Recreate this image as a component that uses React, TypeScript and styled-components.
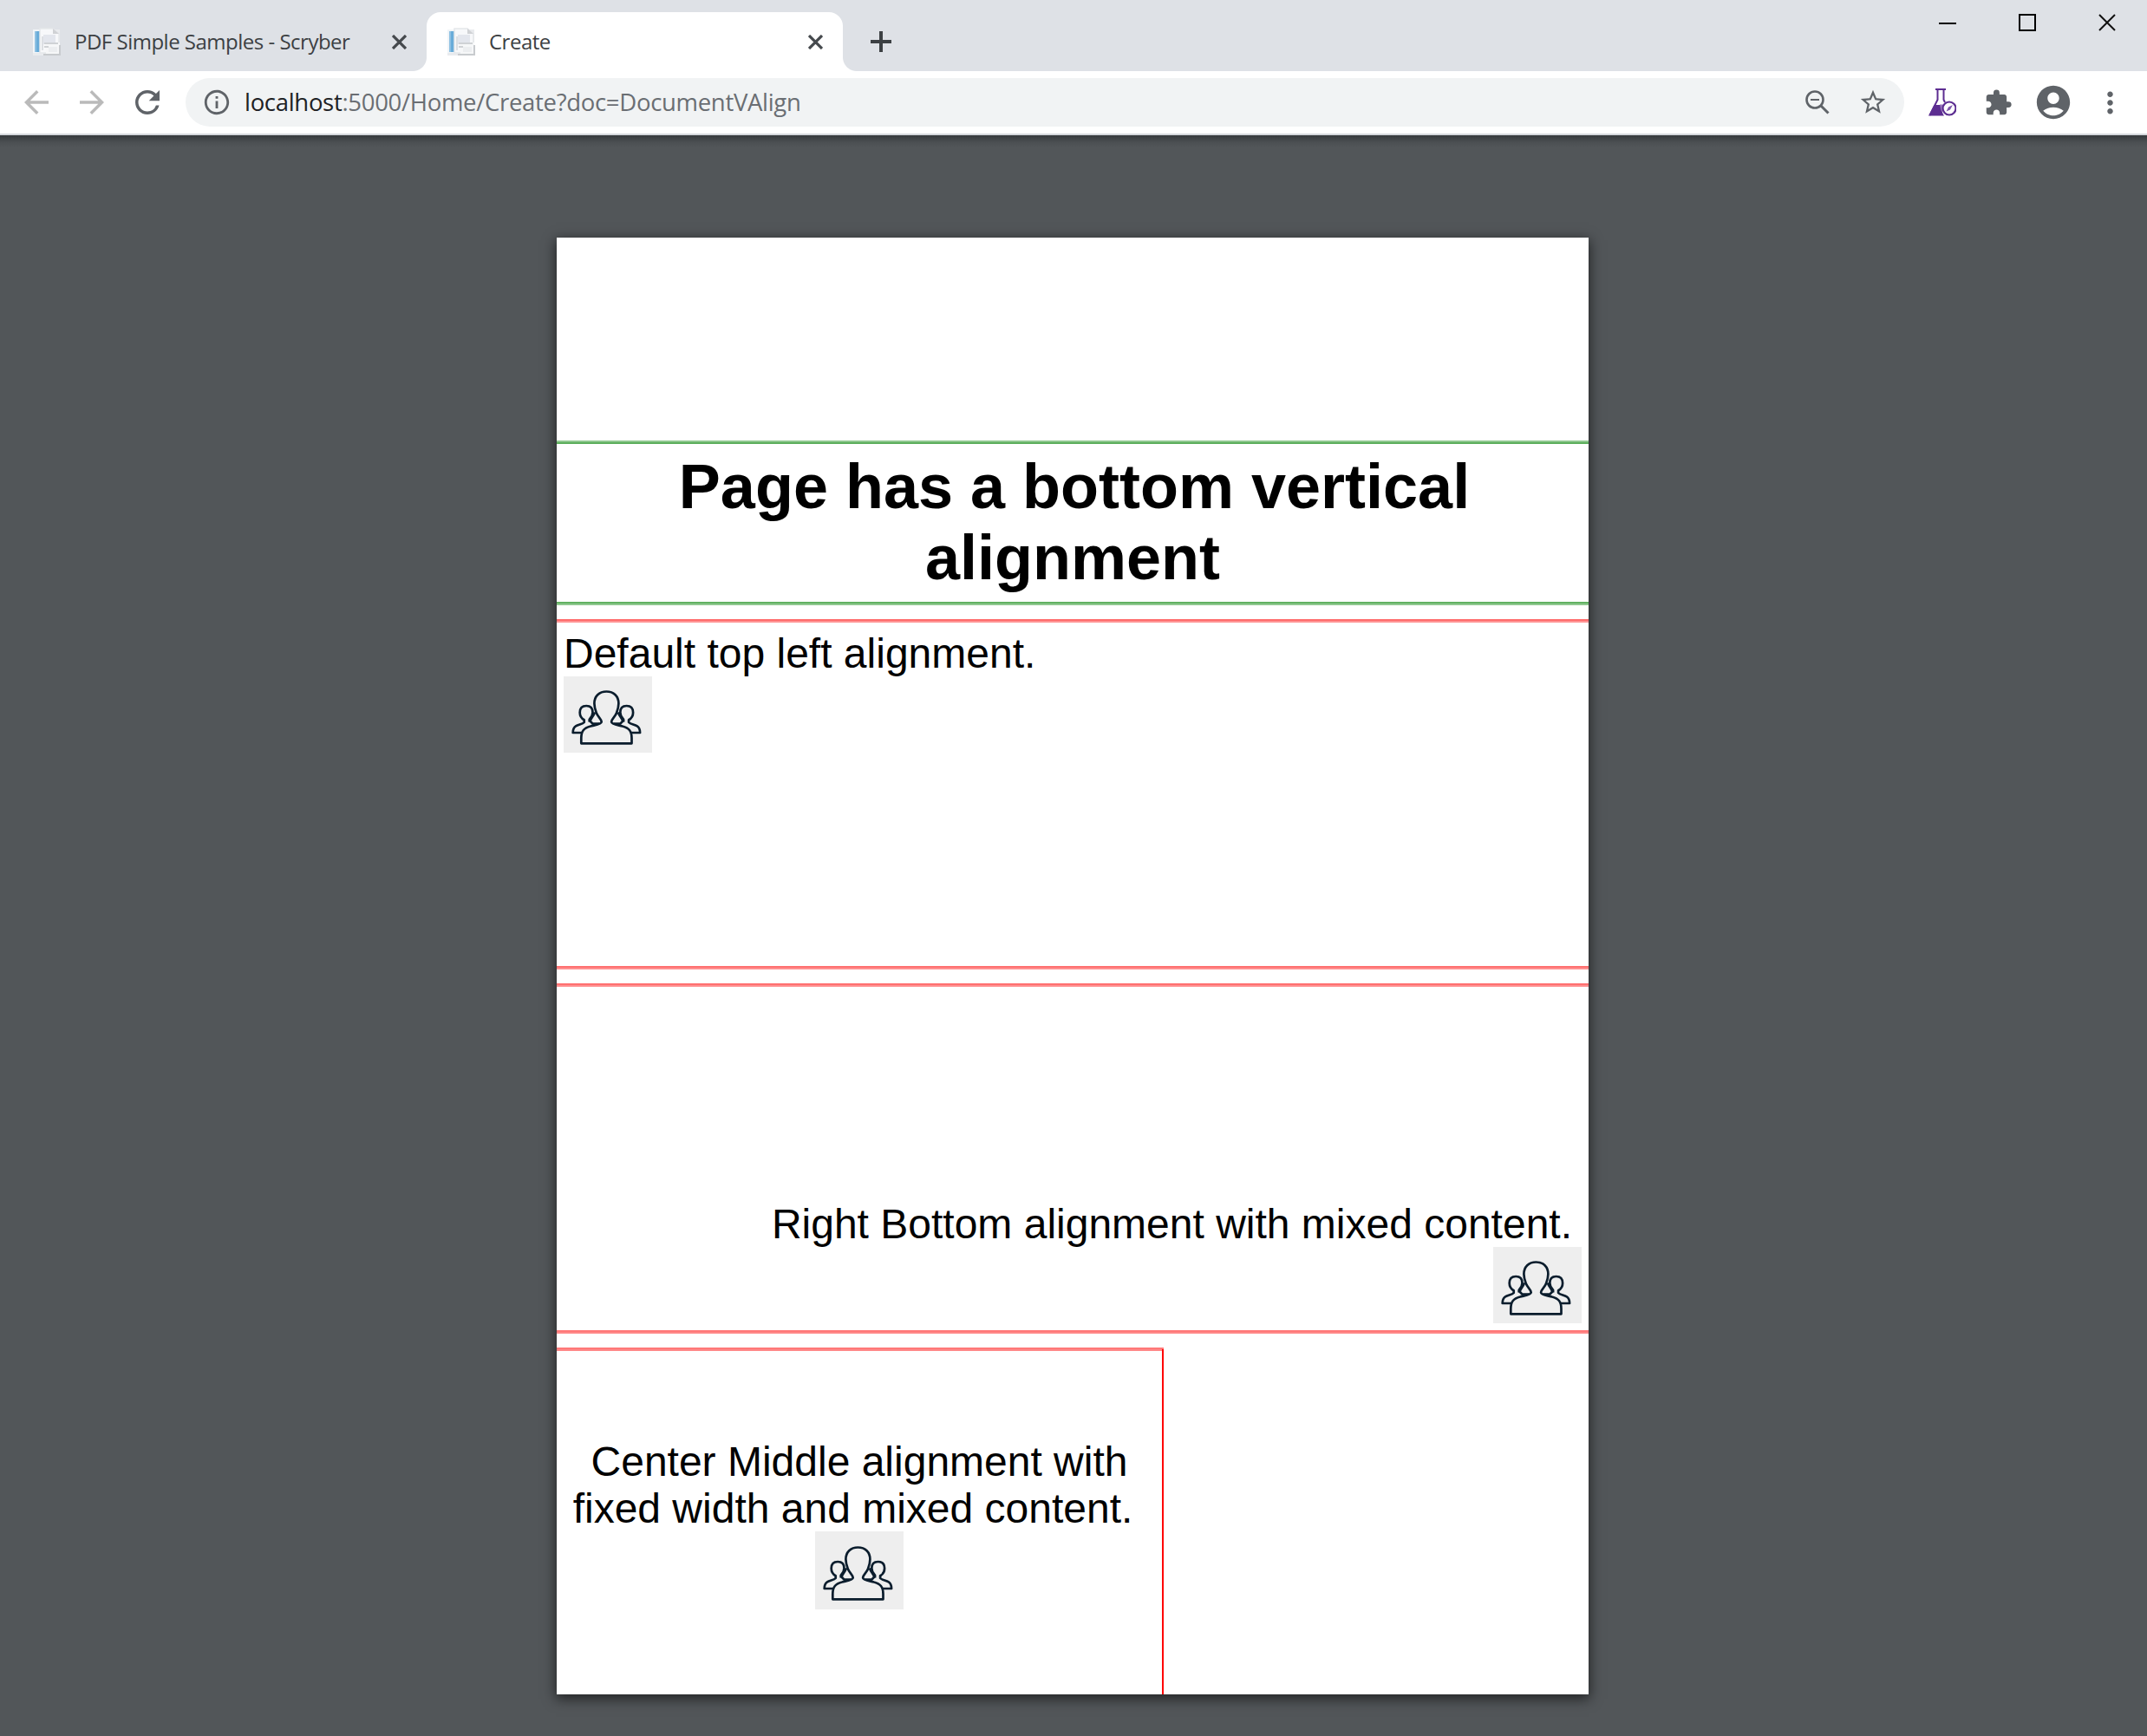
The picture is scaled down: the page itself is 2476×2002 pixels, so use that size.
import React from "react";
import styled, { createGlobalStyle } from "styled-components";
import {
  MdAccountCircle,
  MdArrowBack,
  MdArrowForward,
  MdExtension,
  MdInfoOutline,
  MdMoreVert,
  MdRefresh,
  MdStarBorder,
} from "react-icons/md";

const GlobalStyle = createGlobalStyle`
  * { box-sizing: border-box; }
  body { margin: 0; background: #525659; }
  svg { display: block; flex: none; }
`;

const Window = styled.div`
  display: flex;
  flex-direction: column;
  width: 2476px;
  height: 2002px;
  overflow: hidden;
  font-family: "Open Sans", "Noto Sans", sans-serif;
`;

const TabStrip = styled.header`
  display: flex;
  height: 82px;
  flex: none;
  padding: 14px 0 0 14px;
  background: #dee1e6;
`;

const Tab = styled.div<{ $width: number; $active?: boolean }>`
  position: relative;
  display: flex;
  align-items: center;
  width: ${(p) => p.$width}px;
  height: 68px;
  padding: 0 24px;
  border-radius: 16px 16px 0 0;
  background: ${(p) => (p.$active ? "#fff" : "transparent")};

  &::before,
  &::after {
    content: "";
    display: ${(p) => (p.$active ? "block" : "none")};
    position: absolute;
    bottom: 0;
    width: 16px;
    height: 16px;
  }
  &::before {
    left: -16px;
    background: radial-gradient(circle at 0 0, transparent 15.5px, #fff 16.5px);
  }
  &::after {
    right: -16px;
    background: radial-gradient(circle at 100% 0, transparent 15.5px, #fff 16.5px);
  }
`;

const TabTitle = styled.span<{ $spacing: number }>`
  flex: 1;
  margin-left: 16px;
  font-size: 24px;
  line-height: 32px;
  letter-spacing: ${(p) => p.$spacing}px;
  white-space: nowrap;
  color: #3c4043;
`;

const IconCell = styled.div<{ $color?: string; $width?: number }>`
  display: flex;
  align-items: center;
  justify-content: center;
  flex: none;
  width: ${(p) => p.$width ?? 64}px;
  height: 56px;
  color: ${(p) => p.$color ?? "#5f6368"};
`;

const TabClose = styled(IconCell)`
  width: 20px;
  margin-right: -2px;
`;

const NewTab = styled(IconCell)`
  width: 56px;
  height: 68px;
  margin-left: 16px;
`;

const WindowControls = styled.div`
  display: flex;
  height: 60px;
  margin: -14px 0 0 auto;
`;

const ControlCell = styled.div`
  display: flex;
  justify-content: center;
  width: 92px;
  padding-top: 16px;
`;

const Toolbar = styled.nav`
  display: flex;
  align-items: center;
  flex: none;
  height: 74px;
  padding: 0 10px 0 10px;
  background: #fff;
  border-bottom: 2px solid #d5d8dc;
`;

const AddressBar = styled.div`
  display: flex;
  align-items: center;
  flex: 1;
  height: 56px;
  margin: 0 12px;
  padding: 0 4px;
  border-radius: 28px;
  background: #f1f3f4;
`;

const Url = styled.span`
  flex: 1;
  font-size: 27.5px;
  line-height: 56px;
  letter-spacing: -0.31px;
  white-space: nowrap;
  color: #6a6e73;
`;

const Host = styled.span`
  color: #202124;
`;

const Viewer = styled.main`
  display: flex;
  justify-content: center;
  flex: 1;
  padding: 118px 2px 0 0;
  background: linear-gradient(#363a3d, #4b4f52 8px, #525659 14px) #525659;
`;

const Sheet = styled.article`
  display: flex;
  flex-direction: column;
  width: 1190px;
  height: 1680px;
  padding-top: 234px;
  overflow: hidden;
  background: #fff;
  box-shadow: 0 4px 14px 1px rgba(0, 0, 0, 0.6);
  font-family: "Liberation Sans", Arial, sans-serif;
  color: #000;
`;

const Rule = styled.hr<{ $from: string; $to: string }>`
  flex: none;
  align-self: stretch;
  height: 4px;
  margin: 0;
  border: 0;
  background: linear-gradient(${(p) => p.$from} 50%, ${(p) => p.$to} 50%);
`;

const Heading = styled.h1`
  flex: none;
  height: 182px;
  margin: 0;
  padding: 8px 0 0 4px;
  font-size: 72px;
  font-weight: 700;
  line-height: 82px;
  text-align: center;
`;

const HeadingLine = styled.span<{ $inset?: number }>`
  display: block;
  padding-right: ${(p) => p.$inset ?? 0}px;
`;

const Block = styled.section<{ $width?: string }>`
  display: flex;
  flex-direction: column;
  flex: none;
  width: ${(p) => p.$width ?? "100%"};
  height: 404px;
  margin-top: 16px;
`;

const BlockBody = styled.div<{ $h: string; $v: string; $edge?: boolean }>`
  display: flex;
  flex: 1;
  flex-direction: column;
  align-items: ${(p) => p.$h};
  justify-content: ${(p) => p.$v};
  padding: 8px;
  margin-top: ${(p) => (p.$edge ? "-2px" : 0)};
  border-right: ${(p) => (p.$edge ? "2px solid #f00" : "none")};
`;

const Text = styled.p<{ $right?: number }>`
  height: 54px;
  margin: 0 ${(p) => p.$right ?? 0}px 0 0;
  font-size: 48px;
  line-height: 56px;
  white-space: nowrap;
`;

const Picture = styled.div<{ $tall?: boolean }>`
  flex: none;
  width: 102px;
  height: ${(p) => (p.$tall ? 90 : 88)}px;
  padding-top: ${(p) => (p.$tall ? 1 : 0)}px;
  background: #eee;
`;

const Cross = ({ size, width, color }: { size: number; width: number; color: string }) => (
  <svg width={size} height={size} viewBox={`0 0 ${size} ${size}`}>
    <path d={`M1 1L${size - 1} ${size - 1}M${size - 1} 1L1 ${size - 1}`} stroke={color} strokeWidth={width} />
  </svg>
);

const Favicon = () => (
  <svg width="32" height="32" viewBox="0 0 32 32">
    <rect x="0" y="2" width="31" height="30" fill="#e9ebee" />
    <rect x="0" y="2" width="10" height="27" fill="#f1f5f8" />
    <rect x="2" y="4" width="6" height="24" fill="#69acd9" />
    <rect x="2" y="4" width="2" height="24" fill="#8fc1e3" />
    <path d="M8 1H23L30 7V29H8Z" fill="#f7f8fa" stroke="#e5e7ea" strokeWidth="1.5" />
    <path d="M23 1V7H30Z" fill="#d0d2d5" />
    <rect x="12" y="8" width="14" height="11" fill="#e3e6ed" />
    <path d="M11 10V26" stroke="#dcdfe3" strokeWidth="2" />
    <rect x="15" y="17" width="16" height="13" fill="#f6f7f8" />
    <path d="M13 18H29M13 22H18" stroke="#cfd2d5" strokeWidth="2" />
    <rect x="18" y="22" width="10" height="6" fill="#eceef0" />
    <path d="M12 31H31V20" fill="none" stroke="#c8cbce" strokeWidth="2" />
  </svg>
);

const ZoomOutIcon = () => (
  <svg width="28" height="28" viewBox="0 0 28 28" fill="none" stroke="currentColor">
    <circle cx="11" cy="11" r="9.5" strokeWidth="2.6" />
    <path d="M6 11H16" strokeWidth="2" />
    <path d="M18 18L26.5 26.5" strokeWidth="3" />
  </svg>
);

const FlaskIcon = () => (
  <svg width="32" height="32" viewBox="0 0 32 32">
    <path d="M8 1H20" stroke="#5c2d91" strokeWidth="2" />
    <path d="M10.5 1V13L1.5 31M17.5 1V13L19 16" fill="none" stroke="#5c2d91" strokeWidth="2" />
    <path d="M6.5 19H17C15 23 15 27 18 31.5H0Z" fill="#5c2d91" />
    <path d="M13 18.5H18L16 27C14 26 14 22 13 18.5Z" fill="#9a79bd" />
    <circle cx="24" cy="23" r="7.5" fill="#fff" stroke="#5c2d91" strokeWidth="2.2" />
    <path d="M20.5 26.5L23 21.5L28 19L25 24.5Z" fill="#7d56aa" />
  </svg>
);

const SidePerson = () => (
  <>
    <path d="M29.7 52.500V49.800C32 47.500 33.500 45 33.500 41.500C33.500 36.500 31 34 26.200 34C21.300 34 18.700 37 18.700 41.800C18.700 45.500 20.500 48.500 23.700 50.300V53C22 55 17 55.500 14 57.300C11.500 58.800 10.700 61 10.700 65H20.800" />
    <path d="M36 41.500C34.500 45.500 31.500 48.500 30.500 51.500L33.500 54.700H41" />
  </>
);

const PeopleIcon = () => (
  <svg
    width="102"
    height="88"
    viewBox="0 0 102 88"
    fill="none"
    stroke="#0b1d2d"
    strokeWidth="2.7"
    strokeLinejoin="round"
  >
    <path d="M20.3 77.300V71C20.3 63 23.500 59.500 31 57.500C35 56.300 43.700 55.500 43.700 52.500C43.700 49 39.800 47.500 37.700 42C36.200 38 35.400 35 35.400 31.300C35.400 23 41 17.500 49.400 17.500C57.800 17.500 63.400 23 63.400 31.300C63.400 35 62.600 38 61.100 42C59 47.500 55.100 49 55.100 52.500C55.100 55.500 63.800 56.300 67.800 57.500C75.300 59.500 78.500 63 78.500 71V77.300Z" />
    <SidePerson />
    <g transform="translate(98.8 0) scale(-1 1)">
      <SidePerson />
    </g>
  </svg>
);

export default function App() {
  return (
    <Window>
      <GlobalStyle />
      <TabStrip>
        <Tab $width={478}>
          <Favicon />
          <TabTitle $spacing={-0.5}>PDF Simple Samples - Scryber</TabTitle>
          <TabClose>
            <Cross size={17} width={3.2} color="#45494d" />
          </TabClose>
        </Tab>
        <Tab $width={480} $active>
          <Favicon />
          <TabTitle $spacing={-0.5}>Create</TabTitle>
          <TabClose>
            <Cross size={17} width={3.2} color="#45494d" />
          </TabClose>
        </Tab>
        <NewTab>
          <svg width="24" height="24" viewBox="0 0 24 24">
            <path d="M12 0V24M0 12H24" stroke="#3c4043" strokeWidth="4" />
          </svg>
        </NewTab>
        <WindowControls>
          <ControlCell>
            <svg width="20" height="20" viewBox="0 0 20 20">
              <path d="M0 11H20" stroke="#000" strokeWidth="2" />
            </svg>
          </ControlCell>
          <ControlCell>
            <svg width="20" height="20" viewBox="0 0 20 20">
              <rect x="1" y="1" width="18" height="18" fill="none" stroke="#000" strokeWidth="2" />
            </svg>
          </ControlCell>
          <ControlCell>
            <Cross size={20} width={2} color="#111" />
          </ControlCell>
        </WindowControls>
      </TabStrip>

      <Toolbar>
        <IconCell $color="#bababa">
          <MdArrowBack size={42} />
        </IconCell>
        <IconCell $color="#bababa">
          <MdArrowForward size={42} />
        </IconCell>
        <IconCell>
          <MdRefresh size={42} />
        </IconCell>
        <AddressBar>
          <IconCell>
            <MdInfoOutline size={34} />
          </IconCell>
          <Url>
            <Host>localhost</Host>:5000/Home/Create?doc=DocumentVAlign
          </Url>
          <IconCell>
            <ZoomOutIcon />
          </IconCell>
          <IconCell>
            <MdStarBorder size={34} />
          </IconCell>
        </AddressBar>
        <IconCell>
          <FlaskIcon />
        </IconCell>
        <IconCell>
          <MdExtension size={33} />
        </IconCell>
        <IconCell>
          <MdAccountCircle size={46} />
        </IconCell>
        <IconCell $width={66}>
          <MdMoreVert size={39} />
        </IconCell>
      </Toolbar>

      <Viewer>
        <Sheet>
          <Rule $from="#8fc88f" $to="#5bae5b" />
          <Heading>
            <HeadingLine>Page has a bottom vertical</HeadingLine>
            <HeadingLine $inset={4}>alignment</HeadingLine>
          </Heading>
          <Rule $from="#62b162" $to="#8fc88f" />

          <Block>
            <Rule $from="#ff6b6b" $to="#ff9494" />
            <BlockBody $h="flex-start" $v="flex-start">
              <Text>Default top left alignment.</Text>
              <Picture>
                <PeopleIcon />
              </Picture>
            </BlockBody>
            <Rule $from="#ff7070" $to="#ff9090" />
          </Block>

          <Block>
            <Rule $from="#ff7070" $to="#ff9090" />
            <BlockBody $h="flex-end" $v="flex-end">
              <Text $right={11}>Right Bottom alignment with mixed content.</Text>
              <Picture>
                <PeopleIcon />
              </Picture>
            </BlockBody>
            <Rule $from="#ff7878" $to="#ff8888" />
          </Block>

          <Block $width="700px">
            <Rule $from="#ff7878" $to="#ff8888" />
            <BlockBody $h="center" $v="center" $edge>
              <Text>Center Middle alignment with</Text>
              <Text $right={15}>fixed width and mixed content.</Text>
              <Picture $tall>
                <PeopleIcon />
              </Picture>
            </BlockBody>
          </Block>
        </Sheet>
      </Viewer>
    </Window>
  );
}
